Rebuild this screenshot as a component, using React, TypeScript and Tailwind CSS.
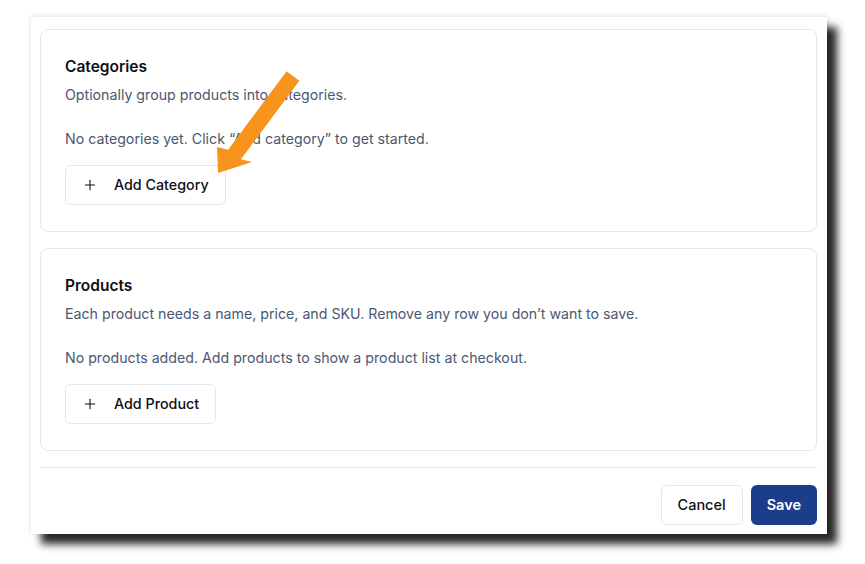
import React from "react";
import { Plus } from "lucide-react";

const sections = [
  {
    title: "Categories",
    description: "Optionally group products into categories.",
    empty: "No categories yet. Click \u201cAdd category\u201d to get started.",
    action: "Add Category",
  },
  {
    title: "Products",
    description:
      "Each product needs a name, price, and SKU. Remove any row you don\u2019t want to save.",
    empty: "No products added. Add products to show a product list at checkout.",
    action: "Add Product",
  },
];

function Section({ section }: { section: (typeof sections)[number] }) {
  return (
    <div className="h-[203px] rounded-lg border border-[#e2e8f0] bg-white px-6 pt-[25px]">
      <h2 className="text-[15.5px] leading-6 font-semibold text-[#0f0f14]">{section.title}</h2>
      <p className="mt-[6px] text-[14.2px] leading-5 text-[#4a5872]">{section.description}</p>
      <p className="mt-6 text-[14.2px] leading-5 text-[#4a5872]">{section.empty}</p>
      <button className="mt-4 flex h-10 items-center gap-4 rounded-md border border-[#e2e8f0] bg-white px-4 text-[14.3px] font-medium text-[#0f0f14]">
        <Plus size={16} strokeWidth={1.6} />
        {section.action}
      </button>
    </div>
  );
}

export default function App() {
  return (
    <div
      className="relative h-[564px] w-[865px] overflow-hidden bg-white pl-[31px] pt-[17px]"
      style={{ fontFamily: "Inter, 'Liberation Sans', sans-serif" }}
    >
      {/* Dialog window */}
      <div className="flex h-[517px] w-[796px] flex-col bg-white pl-[9px] pr-[10px] pt-3 shadow-[10px_10px_8px_rgba(0,0,0,0.85),0_-1px_5px_rgba(0,0,0,0.12)]">
        <div className="flex flex-col gap-4">
          {sections.map((s) => (
            <Section key={s.title} section={s} />
          ))}
        </div>
        {/* Footer */}
        <div className="mt-4 flex justify-end gap-2 border-t border-[#e2e8f0] pt-[17px]">
          <button className="h-10 rounded-md border border-[#e2e8f0] bg-white px-4 text-[14.5px] font-medium text-[#0f0f14]">
            Cancel
          </button>
          <button className="h-10 rounded-md bg-[#1c3e8a] px-4 text-[14.5px] font-semibold text-white">
            Save
          </button>
        </div>
      </div>

      {/* Annotation arrow */}
      <svg
        className="pointer-events-none absolute left-0 top-0"
        width="865"
        height="564"
        viewBox="0 0 865 564"
      >
        <polygon
          points="286.6,71.2 299.4,80.8 240.9,159.3 252,162 218,173 217,147 228.1,149.7"
          fill="#f7941d"
        />
      </svg>
    </div>
  );
}
